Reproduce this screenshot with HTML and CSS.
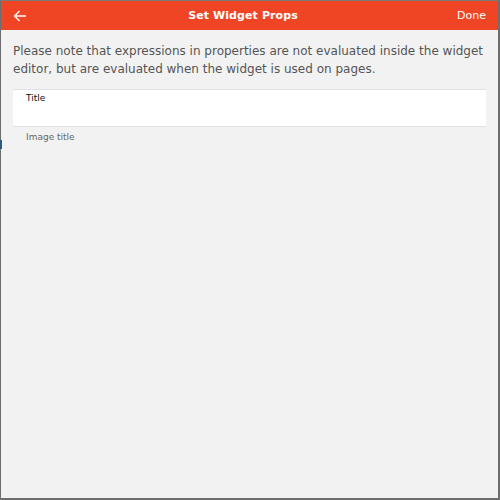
FILE: index.html
```html
<!DOCTYPE html>
<html>
<head>
<meta charset="utf-8">
<link rel="stylesheet" href="styles.css">
</head>
<body>
<div class="window">
  <header class="topbar">
    <button class="back" aria-label="Back">
      <svg width="14" height="12" viewBox="0 0 14 12"><path d="M13 6H1.5M6.5 1L1.5 6l5 5" fill="none" stroke="#fff" stroke-width="1.3"/></svg>
    </button>
    <h1 class="title">Set Widget Props</h1>
    <button class="done">Done</button>
  </header>
  <main class="content">
    <p class="note">Please note that expressions in properties are not evaluated inside the widget editor, but are evaluated when the widget is used on pages.</p>
    <div class="field">
      <label class="field-label">Title</label>
    </div>
    <div class="hint">Image title</div>
  </main>
  <span class="edge-mark"></span>
</div>
</body>
</html>
```
FILE: styles.css
```css
html, body {
  margin: 0;
  padding: 0;
}
body {
  width: 500px;
  height: 500px;
  font-family: "DejaVu Sans", sans-serif;
  background: #7a7a7a;
}
.window {
  position: relative;
  box-sizing: border-box;
  width: 500px;
  height: 500px;
  border-top: 1px solid #7a7a7a;
  border-left: 1px solid #6e6e6e;
  border-right: 2px solid #6e6e6e;
  border-bottom: 2px solid #6e6e6e;
  background: #f2f2f2;
  border-radius: 0 0 2px 2px;
  display: flex;
  flex-direction: column;
}
.topbar {
  height: 29px;
  background: #f04525;
  display: flex;
  align-items: center;
  justify-content: space-between;
  padding: 0 12px 0 12px;
  color: #fff;
}
.back {
  background: none;
  border: 0;
  padding: 0;
  margin: 0;
  width: 16px;
  display: flex;
  align-items: center;
}
.title {
  margin: 0;
  font-size: 11px;
  font-weight: bold;
  letter-spacing: 0.1px;
}
.done {
  background: none;
  border: 0;
  padding: 0;
  color: #fff;
  font-family: "DejaVu Sans", sans-serif;
  font-size: 11px;
}
.content {
  padding: 12px 12px 0 12px;
}
.note {
  margin: 0;
  font-size: 12px;
  line-height: 18px;
  color: #555;
}
.field {
  margin-top: 11px;
  height: 38px;
  background: #fff;
  border-top: 1px solid #e2e2e2;
  border-bottom: 1px solid #e2e2e2;
  box-sizing: border-box;
  padding: 3px 13px;
}
.field-label {
  font-size: 9px;
  color: #111;
  display: block;
}
.hint {
  padding: 4px 13px;
  font-size: 9px;
  line-height: 12px;
  color: #666;
}
.edge-mark {
  position: absolute;
  left: -1px;
  top: 139px;
  width: 2px;
  height: 9px;
  background: #2a5a8a;
}
```
